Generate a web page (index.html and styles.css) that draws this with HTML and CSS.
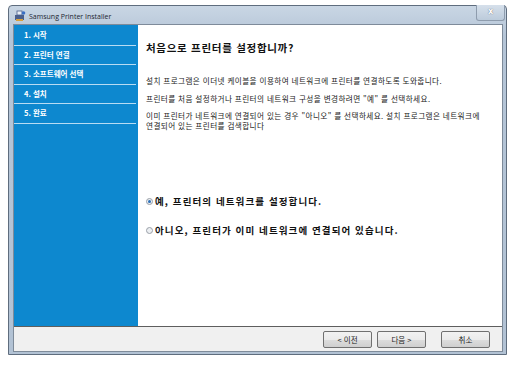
FILE: index.html
```html
<!DOCTYPE html>
<html lang="ko">
<head>
  <meta charset="UTF-8">
  <title>Samsung Printer Installer</title>
  <link rel="stylesheet" href="styles.css">
</head>
<body>
  <div class="window">
    <div class="titlebar">
      <svg class="app-icon" width="12" height="12" viewBox="0 0 12 12">
        <rect x="1" y="5" width="9" height="5" fill="#4a5f8c"/>
        <rect x="3" y="1" width="5" height="4" fill="#e8eef6" stroke="#4a5f8c" stroke-width="0.8"/>
        <rect x="2" y="9" width="7" height="2" fill="#d9a13a"/>
        <circle cx="9.5" cy="3" r="1.8" fill="#3b6fc4"/>
      </svg>
      <span class="title">Samsung Printer Installer</span>
      <div class="close-btn">x</div>
    </div>
    <div class="client">
      <div class="main">
        <ul class="steps">
          <li>1. 시작</li>
          <li>2. 프린터 연결</li>
          <li>3. 소프트웨어 선택</li>
          <li>4. 설치</li>
          <li>5. 완료</li>
        </ul>
        <div class="content">
          <h1>처음으로 프린터를 설정합니까?</h1>
          <p>설치 프로그램은 이더넷 케이블을 이용하여 네트워크에 프린터를 연결하도록 도와줍니다.</p>
          <p>프린터를 처음 설정하거나 프린터의 네트워크 구성을 변경하려면 "예" 를 선택하세요.</p>
          <p>이미 프린터가 네트워크에 연결되어 있는 경우 "아니오" 를 선택하세요. 설치 프로그램은 네트워크에 연결되어 있는 프린터를 검색합니다</p>
          <div class="choices">
            <label class="choice"><span class="radio checked"></span>예, 프린터의 네트워크를 설정합니다.</label>
            <label class="choice"><span class="radio"></span>아니오, 프린터가 이미 네트워크에 연결되어 있습니다.</label>
          </div>
        </div>
      </div>
      <div class="footer">
        <button class="btn">&lt; 이전</button>
        <button class="btn">다음 &gt;</button>
        <button class="btn cancel">취소</button>
      </div>
    </div>
  </div>
</body>
</html>
```

FILE: styles.css
```css
* {
  margin: 0;
  padding: 0;
  box-sizing: border-box;
}

body {
  background-color: #ffffff;
  font-family: "Noto Sans CJK KR", "Noto Sans", sans-serif;
  color: #111;
}

.window {
  margin: 5px 0 0 8px;
  width: 499px;
  height: 350px;
  background: linear-gradient(#c9d6e4, #b5c5d7 30px, #b2c2d4);
  border: 1px solid #5f6d7e;
  border-radius: 4px 4px 0 0;
  padding: 0 3px 2px 4px;
  display: flex;
  flex-direction: column;
}

.titlebar {
  height: 18px;
  display: flex;
  align-items: center;
  position: relative;
}

.app-icon {
  margin: 2px 3px 0 1px;
}

.title {
  font-family: "Open Sans", sans-serif;
  font-size: 7px;
  color: #1c2530;
  padding-top: 2px;
}

.close-btn {
  position: absolute;
  right: -2px;
  top: -1px;
  width: 29px;
  height: 16px;
  border: 1px solid #8e9cad;
  border-top: none;
  border-radius: 0 0 3px 3px;
  background: linear-gradient(#d6e0eb, #bccbdb);
  font-family: "DejaVu Sans", sans-serif;
  font-size: 8px;
  font-weight: bold;
  color: #fff;
  text-shadow: 0 0 1px #445;
  text-align: center;
  line-height: 14px;
}

.client {
  flex: 1;
  border: 1px solid #7e8b9a;
  background: #f0f0f0;
  display: flex;
  flex-direction: column;
}

.main {
  height: 302px;
  display: flex;
  border-bottom: 1px solid #5e5e5e;
}

.steps {
  width: 124px;
  background: #0d88cf;
  list-style: none;
  padding-top: 1px;
}

.steps li {
  height: 19.5px;
  border-bottom: 1px solid #b8dcf3;
  color: #fff;
  font-size: 7.5px;
  font-weight: bold;
  padding-left: 10px;
  line-height: 17px;
  margin-right: 2px;
}

.content {
  flex: 1;
  background: #fff;
  padding: 15px 6px 0 8px;
  word-break: keep-all;
}

h1 {
  font-size: 10.5px;
  font-weight: bold;
  letter-spacing: 0.7px;
  margin-bottom: 21px;
}

.content p {
  font-size: 7.6px;
  line-height: 9.5px;
  letter-spacing: 0.4px;
  margin-bottom: 8px;
  color: #222;
}

.choices {
  margin-top: 64px;
  display: flex;
  flex-direction: column;
  gap: 15px;
}

.choice {
  display: flex;
  align-items: center;
  font-size: 9.5px;
  font-weight: bold;
  letter-spacing: 1.1px;
}

.radio {
  width: 7px;
  height: 7px;
  border-radius: 50%;
  border: 1px solid #9aa0a8;
  background: #eceff2;
  margin-right: 2px;
  position: relative;
}

.radio.checked::after {
  content: "";
  position: absolute;
  left: 1px;
  top: 1px;
  width: 3px;
  height: 3px;
  border-radius: 50%;
  background: #2c6fb8;
}

.footer {
  flex: 1;
  display: flex;
  justify-content: flex-end;
  align-items: center;
  padding-right: 12px;
  gap: 5px;
}

.btn {
  width: 49px;
  height: 17px;
  border: 1px solid #707070;
  border-radius: 2px;
  background: linear-gradient(#f2f2f2, #ebebeb 50%, #dddddd 51%, #cfcfcf);
  font-family: "Noto Sans CJK KR", sans-serif;
  font-size: 7.5px;
  color: #222;
}

.btn.cancel {
  margin-left: 10px;
}
```
